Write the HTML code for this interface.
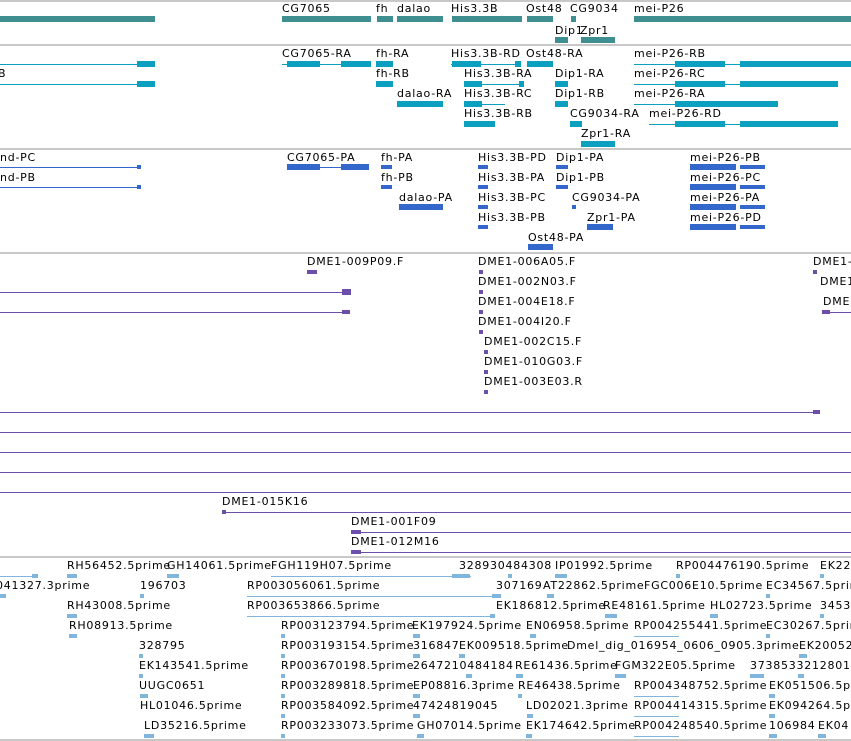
<!DOCTYPE html>
<html><head><meta charset="utf-8"><style>
html,body{margin:0;padding:0;background:#fff;width:851px;height:741px;overflow:hidden;position:relative}
.t{position:absolute;font:11px "DejaVu Sans",sans-serif;line-height:13px;white-space:nowrap;color:#000;letter-spacing:0.75px}
.b{position:absolute;height:6px}
.l{position:absolute;height:1px}
.h{position:absolute;left:0;width:851px;height:2px;background:#c8c8c8}
.g{background:#3f8f91}.r{background:#0ba0c0}.p{background:#3467cc}.u{background:#6b4faa}.e{background:#80b6de}
.s{height:4px}
</style></head><body>
<div class="h" style="top:0"></div>
<div class="h" style="top:44px"></div>
<div class="h" style="top:148px"></div>
<div class="h" style="top:252px"></div>
<div class="h" style="top:556px"></div>
<div class="h" style="top:739px"></div>

<div class="t" style="left:282px;top:2px">CG7065</div>
<div class="t" style="left:376px;top:2px">fh</div>
<div class="t" style="left:397px;top:2px">dalao</div>
<div class="t" style="left:451px;top:2px">His3.3B</div>
<div class="t" style="left:526px;top:2px">Ost48</div>
<div class="t" style="left:570px;top:2px">CG9034</div>
<div class="t" style="left:634px;top:2px">mei-P26</div>
<div class="t" style="left:555px;top:24px">Dip1</div>
<div class="t" style="left:580px;top:24px">Zpr1</div>
<div class="b g" style="left:0;top:16px;width:155px"></div>
<div class="b g" style="left:282px;top:16px;width:89px"></div>
<div class="b g" style="left:377px;top:16px;width:16px"></div>
<div class="b g" style="left:397px;top:16px;width:46px"></div>
<div class="b g" style="left:452px;top:16px;width:70px"></div>
<div class="b g" style="left:527px;top:16px;width:26px"></div>
<div class="b g" style="left:571px;top:16px;width:5px"></div>
<div class="b g" style="left:634px;top:16px;width:217px"></div>
<div class="b g" style="left:555px;top:37px;width:13px"></div>
<div class="b g" style="left:581px;top:37px;width:34px"></div>

<div class="t" style="left:-2px;top:67px">B</div>
<div class="l r" style="left:0;top:64px;width:155px"></div><div class="b r" style="left:137px;top:61px;width:18px"></div>
<div class="l r" style="left:0;top:84px;width:155px"></div><div class="b r" style="left:137px;top:81px;width:18px"></div>
<div class="t" style="left:282px;top:47px">CG7065-RA</div>
<div class="l r" style="left:282px;top:64px;width:89px"></div><div class="b r" style="left:287px;top:61px;width:33px"></div><div class="b r" style="left:341px;top:61px;width:30px"></div>
<div class="t" style="left:376px;top:47px">fh-RA</div><div class="b r" style="left:376px;top:61px;width:17px"></div>
<div class="t" style="left:376px;top:67px">fh-RB</div><div class="b r" style="left:376px;top:81px;width:17px"></div>
<div class="t" style="left:397px;top:87px">dalao-RA</div><div class="b r" style="left:397px;top:101px;width:46px"></div>
<div class="t" style="left:451px;top:47px">His3.3B-RD</div><div class="l r" style="left:451px;top:64px;width:70px"></div><div class="b r" style="left:452px;top:61px;width:29px"></div><div class="b r" style="left:515px;top:61px;width:6px"></div>
<div class="t" style="left:526px;top:47px">Ost48-RA</div><div class="b r" style="left:527px;top:61px;width:26px"></div>
<div class="t" style="left:464px;top:67px">His3.3B-RA</div><div class="l r" style="left:464px;top:84px;width:60px"></div><div class="b r" style="left:464px;top:81px;width:18px"></div><div class="b r" style="left:519px;top:81px;width:5px"></div>
<div class="t" style="left:464px;top:87px">His3.3B-RC</div><div class="l r" style="left:464px;top:104px;width:41px"></div><div class="b r" style="left:464px;top:101px;width:18px"></div>
<div class="t" style="left:464px;top:107px">His3.3B-RB</div><div class="b r" style="left:464px;top:121px;width:31px"></div>
<div class="t" style="left:555px;top:67px">Dip1-RA</div><div class="b r" style="left:555px;top:81px;width:13px"></div>
<div class="t" style="left:555px;top:87px">Dip1-RB</div><div class="b r" style="left:555px;top:101px;width:13px"></div>
<div class="t" style="left:570px;top:107px">CG9034-RA</div><div class="b r" style="left:570px;top:121px;width:12px"></div>
<div class="t" style="left:581px;top:127px">Zpr1-RA</div><div class="b r" style="left:581px;top:141px;width:34px"></div>
<div class="t" style="left:634px;top:47px">mei-P26-RB</div><div class="l r" style="left:634px;top:64px;width:217px"></div><div class="b r" style="left:675px;top:61px;width:50px"></div><div class="b r" style="left:740px;top:61px;width:111px"></div>
<div class="t" style="left:634px;top:67px">mei-P26-RC</div><div class="l r" style="left:634px;top:84px;width:204px"></div><div class="b r" style="left:675px;top:81px;width:50px"></div><div class="b r" style="left:740px;top:81px;width:98px"></div>
<div class="t" style="left:634px;top:87px">mei-P26-RA</div><div class="l r" style="left:634px;top:104px;width:144px"></div><div class="b r" style="left:675px;top:101px;width:103px"></div>
<div class="t" style="left:649px;top:107px">mei-P26-RD</div><div class="l r" style="left:649px;top:124px;width:189px"></div><div class="b r" style="left:675px;top:121px;width:50px"></div><div class="b r" style="left:740px;top:121px;width:98px"></div>

<div class="t" style="left:0;top:151px">nd-PC</div><div class="l p" style="left:0;top:167px;width:141px"></div><div class="b p s" style="left:137px;top:165px;width:4px"></div>
<div class="t" style="left:0;top:171px">nd-PB</div><div class="l p" style="left:0;top:187px;width:141px"></div><div class="b p s" style="left:137px;top:185px;width:4px"></div>
<div class="t" style="left:287px;top:151px">CG7065-PA</div><div class="l p" style="left:287px;top:167px;width:82px"></div><div class="b p" style="left:287px;top:164px;width:33px"></div><div class="b p" style="left:341px;top:164px;width:28px"></div>
<div class="t" style="left:381px;top:151px">fh-PA</div><div class="b p s" style="left:381px;top:165px;width:11px"></div>
<div class="t" style="left:381px;top:171px">fh-PB</div><div class="b p s" style="left:381px;top:185px;width:11px"></div>
<div class="t" style="left:399px;top:191px">dalao-PA</div><div class="b p" style="left:399px;top:204px;width:44px"></div>
<div class="t" style="left:478px;top:151px">His3.3B-PD</div><div class="b p s" style="left:478px;top:165px;width:10px"></div>
<div class="t" style="left:478px;top:171px">His3.3B-PA</div><div class="b p s" style="left:478px;top:185px;width:10px"></div>
<div class="t" style="left:478px;top:191px">His3.3B-PC</div><div class="b p s" style="left:478px;top:205px;width:10px"></div>
<div class="t" style="left:478px;top:211px">His3.3B-PB</div><div class="b p s" style="left:478px;top:225px;width:10px"></div>
<div class="t" style="left:556px;top:151px">Dip1-PA</div><div class="b p s" style="left:556px;top:165px;width:12px"></div>
<div class="t" style="left:556px;top:171px">Dip1-PB</div><div class="b p s" style="left:556px;top:185px;width:12px"></div>
<div class="t" style="left:572px;top:191px">CG9034-PA</div><div class="b p s" style="left:572px;top:205px;width:4px"></div>
<div class="t" style="left:587px;top:211px">Zpr1-PA</div><div class="b p" style="left:587px;top:224px;width:26px"></div>
<div class="t" style="left:528px;top:231px">Ost48-PA</div><div class="b p" style="left:528px;top:244px;width:25px"></div>
<div class="t" style="left:690px;top:151px">mei-P26-PB</div><div class="b p" style="left:690px;top:164px;width:46px"></div><div class="b p s" style="left:740px;top:165px;width:25px"></div>
<div class="t" style="left:690px;top:171px">mei-P26-PC</div><div class="b p" style="left:690px;top:184px;width:46px"></div><div class="b p s" style="left:740px;top:185px;width:25px"></div>
<div class="t" style="left:690px;top:191px">mei-P26-PA</div><div class="b p" style="left:690px;top:204px;width:46px"></div><div class="b p s" style="left:740px;top:205px;width:25px"></div>
<div class="t" style="left:690px;top:211px">mei-P26-PD</div><div class="b p" style="left:690px;top:224px;width:46px"></div><div class="b p s" style="left:740px;top:225px;width:25px"></div>

<div class="t" style="left:307px;top:255px">DME1-009P09.F</div><div class="b u s" style="left:307px;top:270px;width:10px"></div>
<div class="l u" style="left:0;top:292px;width:350px"></div><div class="b u" style="left:342px;top:289px;width:9px"></div>
<div class="l u" style="left:0;top:312px;width:350px"></div><div class="b u s" style="left:342px;top:310px;width:8px"></div>
<div class="t" style="left:478px;top:255px">DME1-006A05.F</div><div class="b u s" style="left:479px;top:270px;width:4px"></div>
<div class="t" style="left:478px;top:275px">DME1-002N03.F</div><div class="b u s" style="left:479px;top:290px;width:4px"></div>
<div class="t" style="left:478px;top:295px">DME1-004E18.F</div><div class="b u s" style="left:479px;top:310px;width:4px"></div>
<div class="t" style="left:478px;top:315px">DME1-004I20.F</div><div class="b u s" style="left:479px;top:330px;width:4px"></div>
<div class="t" style="left:484px;top:335px">DME1-002C15.F</div><div class="b u s" style="left:484px;top:350px;width:4px"></div>
<div class="t" style="left:484px;top:355px">DME1-010G03.F</div><div class="b u s" style="left:484px;top:370px;width:4px"></div>
<div class="t" style="left:484px;top:375px">DME1-003E03.R</div><div class="b u s" style="left:484px;top:390px;width:4px"></div>
<div class="t" style="left:813px;top:255px">DME1-</div><div class="b u s" style="left:813px;top:270px;width:4px"></div>
<div class="t" style="left:820px;top:275px">DME1</div>
<div class="t" style="left:823px;top:295px">DME</div><div class="l u" style="left:822px;top:312px;width:29px"></div><div class="b u s" style="left:822px;top:310px;width:8px"></div>
<div class="l u" style="left:0;top:412px;width:820px"></div><div class="b u s" style="left:813px;top:410px;width:7px"></div>
<div class="l u" style="left:0;top:432px;width:851px"></div>
<div class="l u" style="left:0;top:452px;width:851px"></div>
<div class="l u" style="left:0;top:472px;width:851px"></div>
<div class="l u" style="left:0;top:492px;width:851px"></div>
<div class="t" style="left:222px;top:495px">DME1-015K16</div><div class="l u" style="left:222px;top:512px;width:629px"></div><div class="b u s" style="left:222px;top:510px;width:4px"></div>
<div class="t" style="left:351px;top:515px">DME1-001F09</div><div class="l u" style="left:351px;top:532px;width:500px"></div><div class="b u s" style="left:351px;top:530px;width:10px"></div>
<div class="t" style="left:351px;top:535px">DME1-012M16</div><div class="l u" style="left:351px;top:552px;width:500px"></div><div class="b u s" style="left:351px;top:550px;width:10px"></div>

<div class="l e" style="left:0;top:576px;width:38px"></div><div class="b e s" style="left:32px;top:574px;width:6px"></div>
<div class="t" style="left:67px;top:559px">RH56452.5prime</div><div class="b e s" style="left:67px;top:574px;width:10px"></div>
<div class="t" style="left:167px;top:559px">GH14061.5prime</div><div class="b e s" style="left:167px;top:574px;width:12px"></div>
<div class="t" style="left:271px;top:559px">FGH119H07.5prime</div><div class="l e" style="left:271px;top:576px;width:200px"></div><div class="b e s" style="left:452px;top:574px;width:18px"></div>
<div class="t" style="left:459px;top:559px">328930484308</div><div class="b e s" style="left:508px;top:574px;width:4px"></div>
<div class="t" style="left:555px;top:559px">IP01992.5prime</div><div class="b e s" style="left:555px;top:574px;width:12px"></div>
<div class="t" style="left:676px;top:559px">RP004476190.5prime</div><div class="b e s" style="left:676px;top:574px;width:4px"></div>
<div class="t" style="left:820px;top:559px">EK22</div><div class="b e s" style="left:820px;top:574px;width:4px"></div>

<div class="t" style="left:-4px;top:579px">041327.3prime</div><div class="b e s" style="left:0;top:594px;width:6px"></div>
<div class="t" style="left:140px;top:579px">196703</div><div class="b e s" style="left:140px;top:594px;width:4px"></div>
<div class="t" style="left:247px;top:579px">RP003056061.5prime</div><div class="l e" style="left:247px;top:596px;width:254px"></div><div class="b e s" style="left:492px;top:594px;width:9px"></div>
<div class="t" style="left:496px;top:579px">307169</div>
<div class="t" style="left:543px;top:579px">AT22862.5prime</div><div class="b e s" style="left:547px;top:594px;width:7px"></div>
<div class="t" style="left:644px;top:579px">FGC006E10.5prime</div>
<div class="t" style="left:766px;top:579px">EC34567.5prime</div><div class="b e s" style="left:766px;top:594px;width:4px"></div>

<div class="t" style="left:67px;top:599px">RH43008.5prime</div><div class="b e s" style="left:67px;top:614px;width:10px"></div>
<div class="t" style="left:247px;top:599px">RP003653866.5prime</div><div class="l e" style="left:247px;top:616px;width:248px"></div><div class="b e s" style="left:490px;top:614px;width:5px"></div>
<div class="t" style="left:496px;top:599px">EK186812.5prime</div>
<div class="t" style="left:603px;top:599px">RE48161.5prime</div><div class="b e s" style="left:605px;top:614px;width:12px"></div>
<div class="t" style="left:710px;top:599px">HL02723.5prime</div><div class="b e s" style="left:710px;top:614px;width:8px"></div>
<div class="t" style="left:820px;top:599px">3453</div><div class="b e s" style="left:820px;top:614px;width:4px"></div>

<div class="t" style="left:69px;top:619px">RH08913.5prime</div><div class="b e s" style="left:69px;top:634px;width:8px"></div>
<div class="t" style="left:281px;top:619px">RP003123794.5prime</div><div class="b e s" style="left:281px;top:634px;width:4px"></div>
<div class="t" style="left:412px;top:619px">EK197924.5prime</div><div class="b e s" style="left:413px;top:634px;width:7px"></div>
<div class="t" style="left:526px;top:619px">EN06958.5prime</div><div class="b e s" style="left:530px;top:634px;width:6px"></div>
<div class="t" style="left:634px;top:619px">RP004255441.5prime</div><div class="l e" style="left:634px;top:636px;width:45px"></div>
<div class="t" style="left:766px;top:619px">EC30267.5prime</div><div class="b e s" style="left:766px;top:634px;width:4px"></div>

<div class="t" style="left:139px;top:639px">328795</div>
<div class="t" style="left:281px;top:639px">RP003193154.5prime</div><div class="b e s" style="left:281px;top:654px;width:4px"></div>
<div class="t" style="left:413px;top:639px">316847</div><div class="b e s" style="left:413px;top:654px;width:7px"></div>
<div class="t" style="left:459px;top:639px">EK009518.5prime</div><div class="b e s" style="left:459px;top:654px;width:6px"></div>
<div class="t" style="left:567px;top:639px">Dmel_dig_016954_0606_0905.3prime</div>
<div class="t" style="left:799px;top:639px">EK20052</div><div class="b e s" style="left:799px;top:654px;width:8px"></div>

<div class="t" style="left:139px;top:659px">EK143541.5prime</div><div class="b e s" style="left:139px;top:654px;width:4px"></div>
<div class="t" style="left:281px;top:659px">RP003670198.5prime</div><div class="b e s" style="left:281px;top:674px;width:4px"></div>
<div class="t" style="left:413px;top:659px">2647210484184</div><div class="b e s" style="left:466px;top:674px;width:6px"></div>
<div class="t" style="left:515px;top:659px">RE61436.5prime</div><div class="b e s" style="left:516px;top:674px;width:7px"></div>
<div class="t" style="left:615px;top:659px">FGM322E05.5prime</div><div class="b e s" style="left:615px;top:674px;width:11px"></div>
<div class="t" style="left:750px;top:659px">3738533212801</div><div class="b e s" style="left:750px;top:674px;width:14px"></div><div class="b e s" style="left:798px;top:674px;width:6px"></div>

<div class="t" style="left:139px;top:679px">UUGC0651</div><div class="b e s" style="left:139px;top:674px;width:4px"></div>
<div class="t" style="left:281px;top:679px">RP003289818.5prime</div><div class="b e s" style="left:281px;top:694px;width:4px"></div>
<div class="t" style="left:413px;top:679px">EP08816.3prime</div><div class="b e s" style="left:413px;top:694px;width:7px"></div>
<div class="t" style="left:518px;top:679px">RE46438.5prime</div><div class="b e s" style="left:518px;top:694px;width:4px"></div>
<div class="t" style="left:634px;top:679px">RP004348752.5prime</div><div class="l e" style="left:634px;top:696px;width:45px"></div>
<div class="t" style="left:769px;top:679px">EK051506.5p</div><div class="b e s" style="left:769px;top:694px;width:6px"></div>

<div class="t" style="left:140px;top:699px">HL01046.5prime</div><div class="b e s" style="left:140px;top:694px;width:8px"></div>
<div class="t" style="left:281px;top:699px">RP003584092.5prime</div><div class="b e s" style="left:281px;top:714px;width:4px"></div>
<div class="t" style="left:413px;top:699px">47424819045</div><div class="b e s" style="left:413px;top:714px;width:7px"></div>
<div class="t" style="left:526px;top:699px">LD02021.3prime</div><div class="b e s" style="left:527px;top:714px;width:6px"></div>
<div class="t" style="left:634px;top:699px">RP004414315.5prime</div><div class="l e" style="left:634px;top:716px;width:45px"></div>
<div class="t" style="left:769px;top:699px">EK094264.5p</div><div class="b e s" style="left:769px;top:714px;width:6px"></div>

<div class="t" style="left:144px;top:719px">LD35216.5prime</div><div class="b e s" style="left:144px;top:734px;width:10px"></div>
<div class="t" style="left:281px;top:719px">RP003233073.5prime</div><div class="b e s" style="left:281px;top:734px;width:4px"></div>
<div class="t" style="left:417px;top:719px">GH07014.5prime</div><div class="b e s" style="left:417px;top:734px;width:7px"></div>
<div class="t" style="left:526px;top:719px">EK174642.5prime</div><div class="b e s" style="left:526px;top:734px;width:6px"></div>
<div class="t" style="left:634px;top:719px">RP004248540.5prime</div><div class="l e" style="left:634px;top:736px;width:45px"></div>
<div class="t" style="left:769px;top:719px">106984</div><div class="b e s" style="left:769px;top:734px;width:8px"></div>
<div class="t" style="left:818px;top:719px">EK04</div><div class="b e s" style="left:818px;top:734px;width:8px"></div>
</body></html>
